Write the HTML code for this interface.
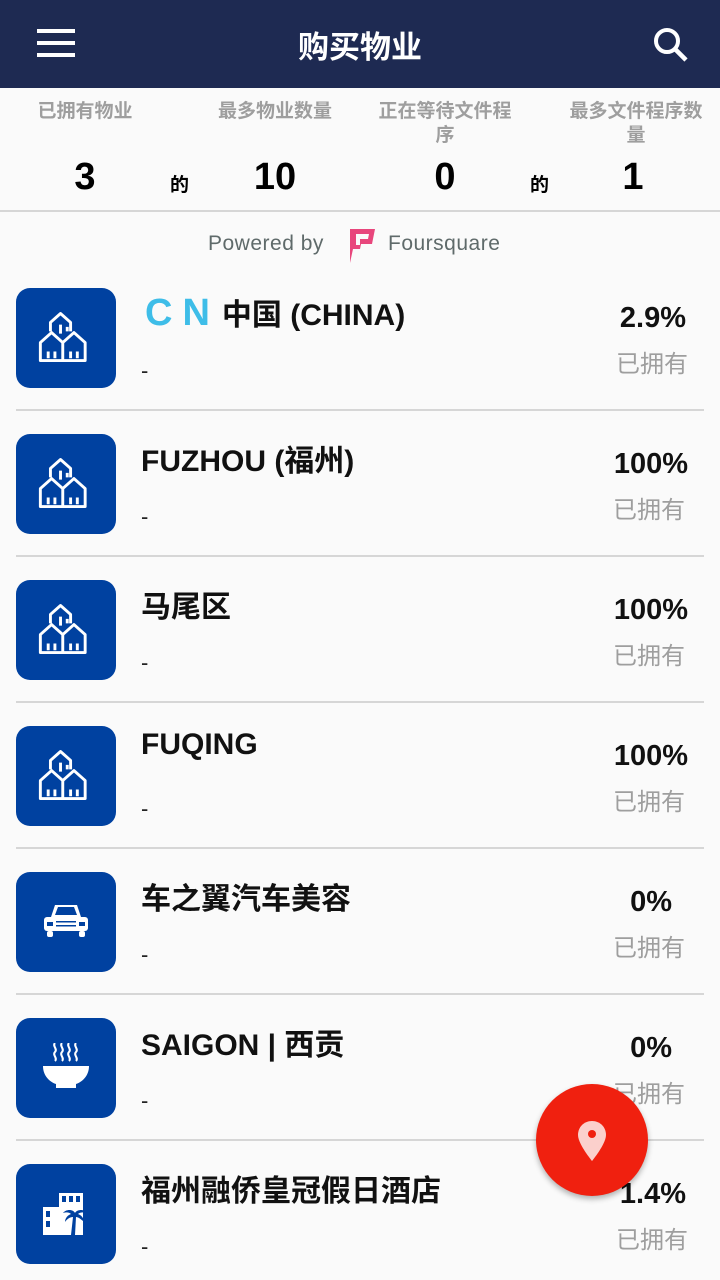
<!DOCTYPE html><html><head><meta charset="utf-8"><style>
*{margin:0;padding:0;box-sizing:border-box}
html,body{width:720px;height:1280px;overflow:hidden}
body{background:#fafafa;font-family:"Liberation Sans","Noto Sans CJK SC",sans-serif;position:relative}
.bar{height:88px;background:#1e2a52;position:relative;color:#fff}
.bar .t{position:absolute;left:0;right:0;top:22px;text-align:center;font-size:31px;font-weight:bold}
.lbl{position:absolute;color:#9e9e9e;font-size:19px;font-weight:bold;text-align:center;line-height:24px}
.num{position:absolute;font-size:38px;font-weight:bold;top:156px;text-align:center;width:80px}
.de{position:absolute;font-size:19px;font-weight:bold;top:170px}
.row{position:absolute;left:0;width:720px;height:146px}
.ic{position:absolute;left:16px;top:0;width:100px;height:100px;background:#0041a0;border-radius:14px}
.ic svg{position:absolute;left:25px;top:25px}
.ti{position:absolute;left:141px;top:2px;font-size:30px;font-weight:bold;color:#111}
.da{position:absolute;left:141px;top:70px;font-size:22px;color:#222}
.pc{position:absolute;right:34px;top:14px;font-size:29px;font-weight:bold;color:#111;text-align:right}
.ow{position:absolute;right:32px;top:56px;font-size:24px;color:#9e9e9e}
.sep{position:absolute;left:16px;width:688px;height:2px;background:#d6d6d6;top:121px}
</style></head><body>
<div class="bar">
<div style="position:absolute;left:37px;top:29px;width:38px;height:4px;background:#fff;box-shadow:0 12px 0 #fff,0 24px 0 #fff"></div>
<div class="t">购买物业</div>
<svg style="position:absolute;left:652px;top:26px" width="40" height="36" viewBox="0 0 40 36"><circle cx="15" cy="15" r="11" fill="none" stroke="#fff" stroke-width="4"/><line x1="23" y1="23" x2="34" y2="34" stroke="#fff" stroke-width="4.5"/></svg>
</div>
<div class="lbl" style="left:25px;top:100px;width:120px">已拥有物业</div>
<div class="lbl" style="left:210px;top:100px;width:130px">最多物业数量</div>
<div class="lbl" style="left:370px;top:100px;width:150px">正在等待文件程序</div>
<div class="lbl" style="left:562px;top:100px;width:148px">最多文件程序数量</div>
<div class="num" style="left:45px">3</div><div class="de" style="left:170px">的</div>
<div class="num" style="left:235px">10</div>
<div class="num" style="left:405px">0</div><div class="de" style="left:530px">的</div>
<div class="num" style="left:593px">1</div>
<div style="position:absolute;left:0;top:210px;width:720px;height:2px;background:#d6d6d6"></div>
<div style="position:absolute;left:208px;top:232px;font-size:21px;color:#5f6a6a;letter-spacing:.5px">Powered by</div>
<svg style="position:absolute;left:347px;top:227px" width="30" height="38" viewBox="0 0 30 38"><path d="M3 2h25l-3 15h-11l-1 5h-7l-3 14z" fill="#e8467c"/><path d="M9 7h13l-1 5h-8v6h-4z" fill="#fafafa"/></svg>
<div style="position:absolute;left:388px;top:232px;font-size:21px;color:#5f6a6a;letter-spacing:.5px">Foursquare</div>

<div class="row" style="top:288px"><div class="ic"><svg style="left:21px;top:21px" width="56" height="56" viewBox="0 0 50 50"><g fill="none" stroke="#fff" stroke-width="2.6" stroke-linejoin="round"><path d="M12 20v-8l9-8 9 8v8"/><path d="M3 46V30l10-9 10 9v16z"/><path d="M23 30l10-9 10 9v16H23"/><path d="M21 14v8 M27 16v4"/><path d="M10 44v-6 M16 44v-6 M30 44v-6 M36 44v-6"/></g></svg></div>
<div class="ti"><span style="color:#3ebde8;font-size:38px;letter-spacing:10px;margin-left:4px;margin-right:2px">CN</span>中国 (CHINA)</div><div class="da">-</div>
<div class="pc">2.9%</div><div class="ow">已拥有</div><div class="sep"></div></div>

<div class="row" style="top:434px"><div class="ic"><svg style="left:21px;top:21px" width="56" height="56" viewBox="0 0 50 50"><g fill="none" stroke="#fff" stroke-width="2.6" stroke-linejoin="round"><path d="M12 20v-8l9-8 9 8v8"/><path d="M3 46V30l10-9 10 9v16z"/><path d="M23 30l10-9 10 9v16H23"/><path d="M21 14v8 M27 16v4"/><path d="M10 44v-6 M16 44v-6 M30 44v-6 M36 44v-6"/></g></svg></div>
<div class="ti">FUZHOU (福州)</div><div class="da">-</div>
<div class="pc" style="right:32px">100%</div><div class="ow" style="right:35px">已拥有</div><div class="sep"></div></div>

<div class="row" style="top:580px"><div class="ic"><svg style="left:21px;top:21px" width="56" height="56" viewBox="0 0 50 50"><g fill="none" stroke="#fff" stroke-width="2.6" stroke-linejoin="round"><path d="M12 20v-8l9-8 9 8v8"/><path d="M3 46V30l10-9 10 9v16z"/><path d="M23 30l10-9 10 9v16H23"/><path d="M21 14v8 M27 16v4"/><path d="M10 44v-6 M16 44v-6 M30 44v-6 M36 44v-6"/></g></svg></div>
<div class="ti">马尾区</div><div class="da">-</div>
<div class="pc" style="right:32px">100%</div><div class="ow" style="right:35px">已拥有</div><div class="sep"></div></div>

<div class="row" style="top:726px"><div class="ic"><svg style="left:21px;top:21px" width="56" height="56" viewBox="0 0 50 50"><g fill="none" stroke="#fff" stroke-width="2.6" stroke-linejoin="round"><path d="M12 20v-8l9-8 9 8v8"/><path d="M3 46V30l10-9 10 9v16z"/><path d="M23 30l10-9 10 9v16H23"/><path d="M21 14v8 M27 16v4"/><path d="M10 44v-6 M16 44v-6 M30 44v-6 M36 44v-6"/></g></svg></div>
<div class="ti">FUQING</div><div class="da">-</div>
<div class="pc" style="right:32px">100%</div><div class="ow" style="right:35px">已拥有</div><div class="sep"></div></div>

<div class="row" style="top:872px"><div class="ic"><svg width="50" height="50" viewBox="0 0 50 50"><path d="M10 20l4-12h22l4 12z M14 18l3-8h16l3 8z" fill="#fff" fill-rule="evenodd"/><rect x="3" y="20" width="44" height="14" rx="3" fill="#fff"/><rect x="6" y="25" width="6" height="4" fill="#0041a0"/><rect x="38" y="25" width="6" height="4" fill="#0041a0"/><rect x="15" y="24" width="20" height="1.5" fill="#0041a0"/><rect x="15" y="28" width="20" height="1.5" fill="#0041a0"/><rect x="6" y="34" width="6" height="6" rx="2" fill="#fff"/><rect x="38" y="34" width="6" height="6" rx="2" fill="#fff"/></svg></div>
<div class="ti">车之翼汽车美容</div><div class="da">-</div>
<div class="pc" style="right:48px">0%</div><div class="ow" style="right:35px">已拥有</div><div class="sep"></div></div>

<div class="row" style="top:1018px"><div class="ic"><svg width="50" height="50" viewBox="0 0 50 50"><path d="M14 0c-3 3 3 6 0 9s3 6 0 9 M21 0c-3 3 3 6 0 9s3 6 0 9 M28 0c-3 3 3 6 0 9s3 6 0 9 M35 0c-3 3 3 6 0 9s3 6 0 9" fill="none" stroke="#fff" stroke-width="2"/><path d="M2 23h46c0 10-7 16-13 18v4H15v-4C9 39 2 33 2 23z" fill="#fff"/></svg></div>
<div class="ti">SAIGON | 西贡</div><div class="da">-</div>
<div class="pc" style="right:48px">0%</div><div class="ow" style="right:35px">已拥有</div><div class="sep"></div></div>

<div class="row" style="top:1164px"><div class="ic"><svg width="50" height="50" viewBox="0 0 50 50"><rect x="18" y="4" width="24" height="42" fill="#fff"/><rect x="2" y="18" width="18" height="28" fill="#fff"/><g fill="#0041a0"><rect x="21" y="7" width="4" height="6"/><rect x="28" y="7" width="4" height="6"/><rect x="35" y="7" width="4" height="6"/><rect x="5" y="22" width="4" height="6"/><rect x="5" y="32" width="4" height="6"/><path d="M22 24c3-4 10-4 12 0 2-4 10-4 12 0-3-1-7-1-9 1 3 1 6 4 6 8-3-3-6-5-8-5l-1 18h-4l2-18c-3 0-6 2-8 5 0-4 3-7 6-8-2-2-5-2-8-1z"/></g></svg></div>
<div class="ti">福州融侨皇冠假日酒店</div><div class="da">-</div>
<div class="pc">1.4%</div><div class="ow">已拥有</div></div>

<div style="position:absolute;left:536px;top:1084px;width:112px;height:112px;border-radius:50%;background:#f0200f;box-shadow:0 3px 6px rgba(0,0,0,.3)"><svg style="position:absolute;left:41px;top:37px" width="30" height="40" viewBox="0 0 30 40"><path d="M15 0C7 0 1 6 1 14c0 9 14 26 14 26s14-17 14-26C29 6 23 0 15 0z" fill="#fbd0cc"/><circle cx="15" cy="13" r="4" fill="#f0200f"/></svg></div>
</body></html>
